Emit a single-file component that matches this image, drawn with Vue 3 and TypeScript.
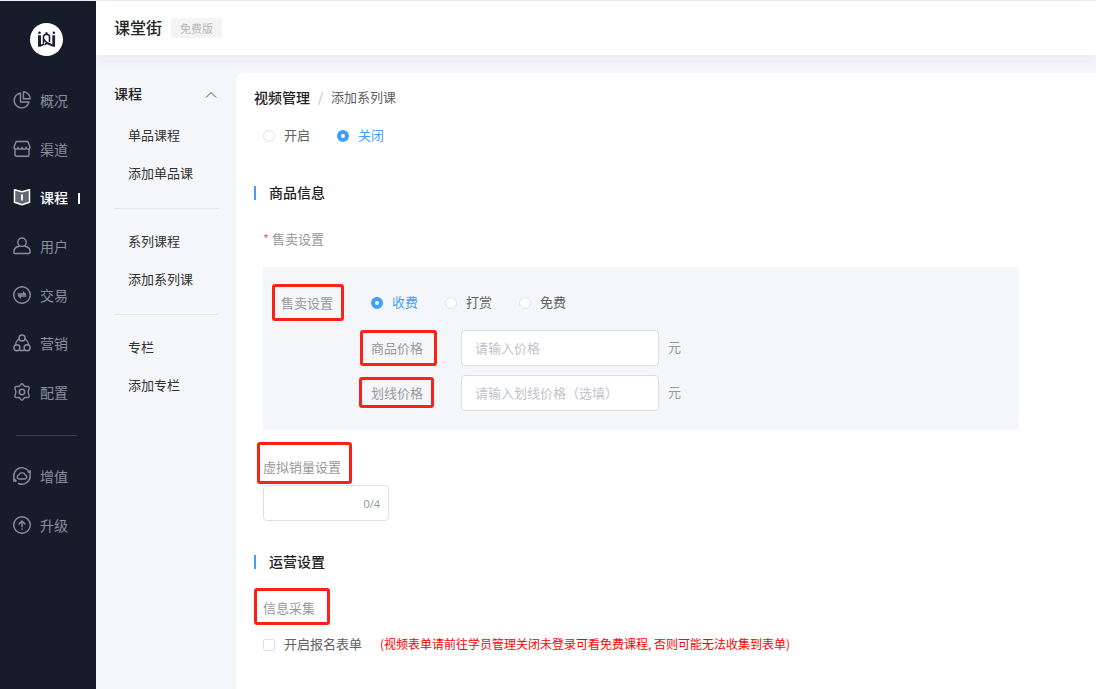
<script setup lang="ts">
import { ref } from 'vue'

interface NavItem {
  icon: string
  label: string
  active?: boolean
}

const mainNav: NavItem[] = [
  { icon: 'overview', label: '概况' },
  { icon: 'channel', label: '渠道' },
  { icon: 'course', label: '课程', active: true },
  { icon: 'user', label: '用户' },
  { icon: 'trade', label: '交易' },
  { icon: 'marketing', label: '营销' },
  { icon: 'settings', label: '配置' },
]
const extraNav: NavItem[] = [
  { icon: 'cloud', label: '增值' },
  { icon: 'upgrade', label: '升级' },
]
const navGroups = [mainNav, extraNav]

const menuOpen = ref(true)
const menuGroups: string[][] = [
  ['单品课程', '添加单品课'],
  ['系列课程', '添加系列课'],
  ['专栏', '添加专栏'],
]

const status = ref('关闭')
const saleMode = ref('收费')
const price = ref('')
const linePrice = ref('')
const virtualSales = ref('')
const signupForm = ref(false)
</script>

<template>
  <div class="app">
    <aside class="sidebar">
      <svg class="logo" viewBox="0 0 33 33" aria-label="课堂街" role="img">
        <circle cx="16.5" cy="16.5" r="16.5" fill="#fff" />
        <g fill="#1a2030">
          <circle cx="9.5" cy="9.800" r="1.300" />
          <circle cx="23.800" cy="9.800" r="1.300" />
          <path d="M8 12.300h3v9.200l3-1.500v2l-3.500 1.800H8z" />
          <path d="M22.300 12.300h2.800v11.500h-2l-6-2.600-2.600 1.200v-2l2.500-1.100 5.300 2.300z" />
          <path d="M16.500 8.800l1.300 1.200-.4 1.300h-1.800l-.4-1.300z" />
        </g>
        <path
          d="M13.500 20v-6.500c0-1.200 1.200-2 3-2s3 .8 3 2V19M13.500 15.500c1 2.500 3.500 4.800 8.500 6.500"
          fill="none"
          stroke="#1a2030"
          stroke-width="1.600"
        />
      </svg>
      <nav
        v-for="(group, i) in navGroups"
        :key="i"
        class="nav"
        :class="i === 0 ? 'nav-main' : 'nav-extra'"
      >
        <a
          v-for="item in group"
          :key="item.label"
          href="#"
          class="nav-item"
          :class="{ active: item.active }"
        >
          <svg class="nav-icon" viewBox="0 0 18 18" aria-hidden="true">
            <template v-if="item.icon === 'overview'">
              <path d="M7.500 2A7.500 7.500 0 1 0 16 11H7.500z" />
              <path d="M10.500 .8v7h6.700a7 7 0 0 0-6.700-7z" />
            </template>
            <template v-else-if="item.icon === 'channel'">
              <path d="M3.200 1.500h11.600L17 7c0 2.800-4 2.800-4 .2 0 2.600-4 2.600-4 0 0 2.600-4 2.600-4 0C5 9.800 1 9.800 1 7z" />
              <path d="M2 9.500v5.200A1.500 1.500 0 0 0 3.500 16.200h11a1.500 1.500 0 0 0 1.500-1.500V9.500" />
            </template>
            <template v-else-if="item.icon === 'course'">
              <path
                d="M1.500 1.800L9 3.800l7.500-2v12.500L9 16.800l-7.500-2.500z"
                fill="#ffffff55"
                stroke-width="1.500"
              />
              <path d="M9 7v4.800" stroke-width="1.800" />
            </template>
            <template v-else-if="item.icon === 'user'">
              <circle cx="9" cy="5.200" r="4.200" />
              <path d="M6 9.200C3 9.800.8 12 .8 15c0 .9.500 1.500 1.400 1.500h13.600c.9 0 1.400-.6 1.400-1.500 0-3-2.200-5.200-5.200-5.800" />
            </template>
            <template v-else-if="item.icon === 'trade'">
              <circle cx="9" cy="9" r="8.300" />
              <path d="M5.200 8.100h7M12.800 10h-7" stroke-width="1.500" />
              <path d="M10 5l3.500 3.800H10zM8 13.100L4.500 9.300H8z" class="solid" />
            </template>
            <template v-else-if="item.icon === 'marketing'">
              <circle cx="9" cy="4" r="3" />
              <circle cx="3.900" cy="13.700" r="3" />
              <circle cx="14.100" cy="13.700" r="3" />
              <path d="M5.800 5C3.800 6.500 2.600 8.200 2.400 10.500M12.200 5c2 1.500 3.200 3.200 3.400 5.500M6.800 16.200c1.500.4 2.900.4 4.400 0" />
            </template>
            <template v-else-if="item.icon === 'settings'">
              <path d="M9 .8c1 0 1.500 1.900 2.700 2.500s3.300-.3 4 .4c.9 1 .5 1.700.1 2.500-1 1.900-1 3.700 0 5.600.4.800.8 1.500-.1 2.500-.7.700-2.800-.2-4 .4S10 17.200 9 17.200s-1.500-1.900-2.700-2.500-3.300.3-4-.4c-.9-1-.5-1.700-.1-2.500 1-1.900 1-3.700 0-5.600-.4-.8-.8-1.500.1-2.500.7-.7 2.800.2 4-.4S8 .8 9 .8z" />
              <circle cx="9" cy="9" r="2.700" />
            </template>
            <template v-else-if="item.icon === 'cloud'">
              <path d="M5 1.700A8.300 8.300 0 0 1 15.200 3.600M1.300 6A8.300 8.300 0 0 0 2.800 14.400M17 7.500A8.300 8.300 0 0 1 5.500 16.500M1 9.500A8.300 8.300 0 0 1 5 1.700" />
              <path d="M6 12a2.100 2.100 0 0 1-.2-4.100 3.400 3.400 0 0 1 6.400 0A2.100 2.100 0 0 1 12 12z" />
              <path d="M13.800 4.800L17.800 3v4.200zM4.200 13.500L.2 15v-4z" class="solid" />
            </template>
            <template v-else>
              <circle cx="9" cy="9" r="8.300" />
              <path d="M9 10.800V5.200M6 8L9 5l3 3M9 13v.3" />
            </template>
          </svg>
          <span>{{ item.label }}</span>
        </a>
      </nav>
    </aside>

    <div class="body">
      <header class="topbar">
        <h1>课堂街</h1>
        <span class="version">免费版</span>
      </header>

      <div class="workspace">
        <nav class="submenu">
          <button type="button" class="submenu-title" :aria-expanded="menuOpen" @click="menuOpen = !menuOpen">
            <span>课程</span>
            <svg viewBox="0 0 12 8" aria-hidden="true"><path d="M1 6.500L6 1.500l5 5" /></svg>
          </button>
          <template v-if="menuOpen">
            <ul v-for="group in menuGroups" :key="group[0]">
              <li v-for="entry in group" :key="entry"><a href="#">{{ entry }}</a></li>
            </ul>
          </template>
        </nav>

        <main class="card">
          <div class="breadcrumb">
            <a href="#">视频管理</a>
            <i>/</i>
            <span>添加系列课</span>
          </div>

          <form class="form" @submit.prevent>
            <div class="options status">
              <label v-for="o in ['开启', '关闭']" :key="o">
                <input v-model="status" type="radio" name="status" :value="o" />
                <span>{{ o }}</span>
              </label>
            </div>

            <h2><span>商品信息</span></h2>
            <div class="field-label required"><i>*</i><span>售卖设置</span></div>

            <section class="panel">
              <div class="row">
                <span class="name"><span class="mark mark-sale">售卖设置</span></span>
                <div class="options">
                  <label v-for="o in ['收费', '打赏', '免费']" :key="o">
                    <input v-model="saleMode" type="radio" name="sale" :value="o" />
                    <span>{{ o }}</span>
                  </label>
                </div>
              </div>
              <div class="row nested">
                <label class="name" for="price"><span class="mark mark-price">商品价格</span></label>
                <input id="price" v-model="price" class="text" type="text" placeholder="请输入价格" />
                <span class="unit">元</span>
              </div>
              <div class="row nested">
                <label class="name" for="line-price"><span class="mark mark-line">划线价格</span></label>
                <input id="line-price" v-model="linePrice" class="text" type="text" placeholder="请输入划线价格（选填）" />
                <span class="unit">元</span>
              </div>
            </section>

            <label class="field-label virtual" for="virtual"><span class="mark mark-virtual">虚拟销量设置</span></label>
            <div class="counter">
              <input id="virtual" v-model="virtualSales" class="text" type="text" maxlength="4" />
              <span>{{ virtualSales.length }}/4</span>
            </div>

            <h2 class="operation"><span>运营设置</span></h2>
            <div class="field-label collect"><span class="mark mark-collect">信息采集</span></div>
            <div class="signup">
              <label>
                <input v-model="signupForm" type="checkbox" />
                <span>开启报名表单</span>
              </label>
              <p>(视频表单请前往学员管理关闭未登录可看免费课程, 否则可能无法收集到表单)</p>
            </div>
          </form>
        </main>
      </div>
    </div>
  </div>
</template>

<style>
body {
  margin: 0;
  background: #f5f6fa;
}
</style>

<style scoped>
* {
  box-sizing: border-box;
}

.app {
  display: flex;
  min-height: 100vh;
  border-top: 1px solid #eeeeee;
  font-family: "Noto Sans CJK SC", sans-serif;
  font-size: 13px;
  line-height: 20px;
  color: #606266;
}

a {
  color: inherit;
  text-decoration: none;
}

i {
  font-style: normal;
}

h1,
h2,
p,
ul {
  margin: 0;
  padding: 0;
}

.sidebar {
  flex: none;
  width: 96px;
  background: #171c2b;
}

.logo {
  display: block;
  width: 33px;
  height: 33px;
  margin: 22px 0 21px 30px;
}

.nav {
  display: flex;
  flex-direction: column;
}

.nav-main {
  height: 340px;
}

.nav-extra {
  height: 98px;
  margin-top: 35px;
  position: relative;
}

.nav-extra::before {
  content: "";
  position: absolute;
  top: -17px;
  left: 16px;
  width: 61px;
  height: 1px;
  background: #3c404e;
}

.nav-item {
  flex: 1;
  display: flex;
  align-items: center;
  gap: 9px;
  padding: 0 16px 0 13px;
  font-size: 14px;
  color: #8b909d;
}

.nav-item.active {
  color: #ffffff;
  font-weight: 500;
}

.nav-item.active::after {
  content: "";
  width: 2px;
  height: 11px;
  margin-left: auto;
  background: #ffffff;
}

.nav-icon {
  flex: none;
  width: 18px;
  height: 18px;
  margin-bottom: 2px;
  fill: none;
  stroke: currentColor;
  stroke-width: 1.4;
  stroke-linejoin: round;
  stroke-linecap: round;
}

.nav-icon .solid {
  fill: currentColor;
  stroke: none;
}

/* Lifts CJK text one pixel so that it centres optically beside its control */
.nav-item span,
.options span,
.signup span,
.signup p,
.unit,
h2 span {
  padding-bottom: 2px;
  line-height: 18px;
}

.body {
  flex: 1;
  min-width: 0;
  display: flex;
  flex-direction: column;
  background: #f5f6fa;
}

.topbar {
  display: flex;
  align-items: center;
  gap: 9px;
  height: 54px;
  padding: 0 18px;
  background: #ffffff;
  box-shadow: 0 2px 14px rgba(30, 35, 60, 0.08);
}

.topbar h1 {
  padding-bottom: 2px;
  font-size: 16px;
  font-weight: 500;
  color: #222222;
}

.version {
  padding: 0 9px;
  border-radius: 2px;
  background: #f4f4f4;
  font-size: 11px;
  color: #b4b4b4;
}

.workspace {
  flex: 1;
  display: flex;
  padding-top: 18px;
}

.submenu {
  flex: none;
  width: 140px;
  padding: 0 18px;
}

.submenu-title {
  display: flex;
  align-items: center;
  justify-content: space-between;
  width: 100%;
  height: 40px;
  margin-bottom: 3px;
  padding: 0 1px 0 0;
  border: 0;
  background: none;
  font: inherit;
  font-size: 14px;
  font-weight: 500;
  color: #222222;
}

.submenu-title svg {
  width: 12px;
  height: 8px;
  margin-top: 4px;
  fill: none;
  stroke: #555555;
  stroke-width: 1;
}

.submenu ul {
  list-style: none;
  padding-bottom: 16px;
}

.submenu ul + ul {
  padding-top: 13px;
  border-top: 1px solid #e4e6ec;
}

.submenu li a {
  display: block;
  padding-left: 14px;
  line-height: 38px;
  color: #303133;
}

.card {
  flex: 1;
  min-width: 0;
  padding: 14px 18px;
  border-top-left-radius: 8px;
  background: #ffffff;
}

.breadcrumb {
  display: flex;
  gap: 8px;
}

.breadcrumb a {
  font-size: 14px;
  font-weight: 500;
  color: #222222;
}

.breadcrumb i {
  color: #b4b8c2;
}

.form {
  padding: 0 59px 0 9px;
}

.options {
  display: flex;
  gap: 27px;
}

.status {
  margin-top: 19px;
}

.options label,
.signup label {
  display: flex;
  align-items: center;
  gap: 9px;
}

.options input,
.signup input {
  appearance: none;
  width: 12px;
  height: 12px;
  margin: 0;
  border: 1px solid #dcdfe6;
  border-radius: 50%;
  background: #ffffff;
}

.options input:checked {
  border: 4px solid #409eff;
}

.options input:checked + span {
  color: #409eff;
}

.signup input {
  border-radius: 2px;
}

.signup input:checked {
  border-color: #409eff;
  background: #409eff;
}

h2 {
  display: flex;
  align-items: center;
  gap: 13px;
  margin: 37px 0 0 -9px;
  font-size: 14px;
  font-weight: 500;
  color: #222222;
}

h2::before {
  content: "";
  width: 2px;
  height: 14px;
  background: #409eff;
}

h2.operation {
  margin-top: 31px;
}

.field-label {
  display: block;
  color: #999999;
}

.required {
  display: flex;
  gap: 3px;
  margin-top: 26px;
}

.required i {
  color: #f56c6c;
}

.panel {
  display: flex;
  flex-direction: column;
  gap: 9px;
  margin-top: 18px;
  padding: 18px 18px 19px;
  background: #f5f6fa;
}

.row {
  display: flex;
  align-items: center;
  height: 36px;
}

.nested {
  padding-left: 90px;
}

.name {
  flex: none;
  width: 90px;
  color: #999999;
}

.text {
  width: 198px;
  height: 36px;
  padding: 0 13px 2px;
  border: 1px solid #dcdfe6;
  border-radius: 4px;
  background: #ffffff;
  font: inherit;
  color: #606266;
  outline: none;
}

.text::placeholder {
  color: #c0c4cc;
  opacity: 1;
}

.unit {
  margin-left: 9px;
  font-size: 13px;
  color: #999999;
}

.virtual {
  margin-top: 27px;
}

.counter {
  position: relative;
  width: 126px;
  height: 36px;
  margin-top: 8px;
}

.counter .text {
  width: 100%;
}

.counter span {
  position: absolute;
  top: 9px;
  right: 9px;
  font-family: "Open Sans", sans-serif;
  font-size: 11px;
  color: #909399;
}

.collect {
  margin-top: 26px;
}

.signup {
  display: flex;
  gap: 18px;
  margin-top: 17px;
}

.signup p {
  font-size: 12px;
  color: #ff0000;
}

/* Red frames laid over the highlighted labels */
.mark {
  position: relative;
}

.mark::after {
  content: "";
  position: absolute;
  border: 3px solid #fb2114;
  border-radius: 3px;
  pointer-events: none;
}

.mark-sale::after {
  inset: -9px -11px -9px -9px;
}

.mark-price::after {
  inset: -8px -14px -9px -11px;
}

.mark-line::after {
  inset: -6px -11px -6px -12px;
}

.mark-virtual::after {
  inset: -15px -11px -8px -6px;
}

.mark-collect::after {
  inset: -10px -15px -8px -9px;
}
</style>
